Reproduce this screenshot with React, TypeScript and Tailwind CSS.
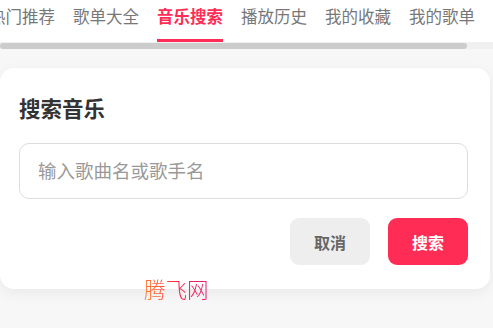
import React from "react";

const tabs = ["热门推荐", "歌单大全", "音乐搜索", "播放历史", "我的收藏", "我的歌单"];

export default function App() {
  return (
    <div
      className="relative w-[493px] h-[328px] overflow-hidden bg-[#f7f7f7]"
      style={{ fontFamily: '"Noto Sans CJK SC", "Noto Sans", sans-serif' }}
    >
      {/* Tabs */}
      <div className="bg-white">
        <div className="flex h-[42px] -ml-[11px]">
          {tabs.map((t) => {
            const active = t === "音乐搜索";
            return (
              <div
                key={t}
                className={
                  "shrink-0 w-[66px] mr-[18px] flex flex-col justify-between " +
                  (active ? "text-[#ff2d55] font-bold" : "text-[#777]")
                }
              >
                <span className="text-[16.5px] leading-[22px] pt-[5px] whitespace-nowrap">{t}</span>
                <span className={"h-[3px] " + (active ? "bg-[#ff2d55]" : "bg-transparent")} />
              </div>
            );
          })}
        </div>
        {/* Scrollbar */}
        <div className="h-[7px] bg-[#f0f0f0] flex items-center">
          <div className="h-[6px] w-[467px] rounded-full bg-[#cccccc]" />
        </div>
      </div>

      {/* Card */}
      <div className="mt-[19px] w-[490px] bg-white rounded-[14px] shadow-[0_4px_14px_rgba(0,0,0,0.06)] px-[19px] pt-[25px] pb-[24px]">
        <h2 className="text-[21.5px] leading-[30px] font-bold text-[#333]">搜索音乐</h2>
        <div className="mt-[20px] h-[56px] w-[449px] rounded-[10px] border border-[#dddddd] flex items-center px-[18px]">
          <span className="text-[18.5px] text-[#999]">输入歌曲名或歌手名</span>
        </div>
        <div className="mt-[19px] flex justify-end gap-[18px] pr-[3px]">
          <button className="w-[80px] h-[47px] rounded-[9px] bg-[#eeeeee] text-[#666] text-[16px] font-bold">
            取消
          </button>
          <button className="w-[80px] h-[47px] rounded-[9px] bg-[#ff2d55] text-white text-[16px] font-bold">
            搜索
          </button>
        </div>
      </div>

      {/* Watermark */}
      <div className="absolute left-[144px] top-[273px] text-[21.5px] font-light bg-gradient-to-r from-[#ff7a2a] via-[#ff2040] to-[#e0207a] bg-clip-text text-transparent">
        腾飞网
      </div>
    </div>
  );
}
